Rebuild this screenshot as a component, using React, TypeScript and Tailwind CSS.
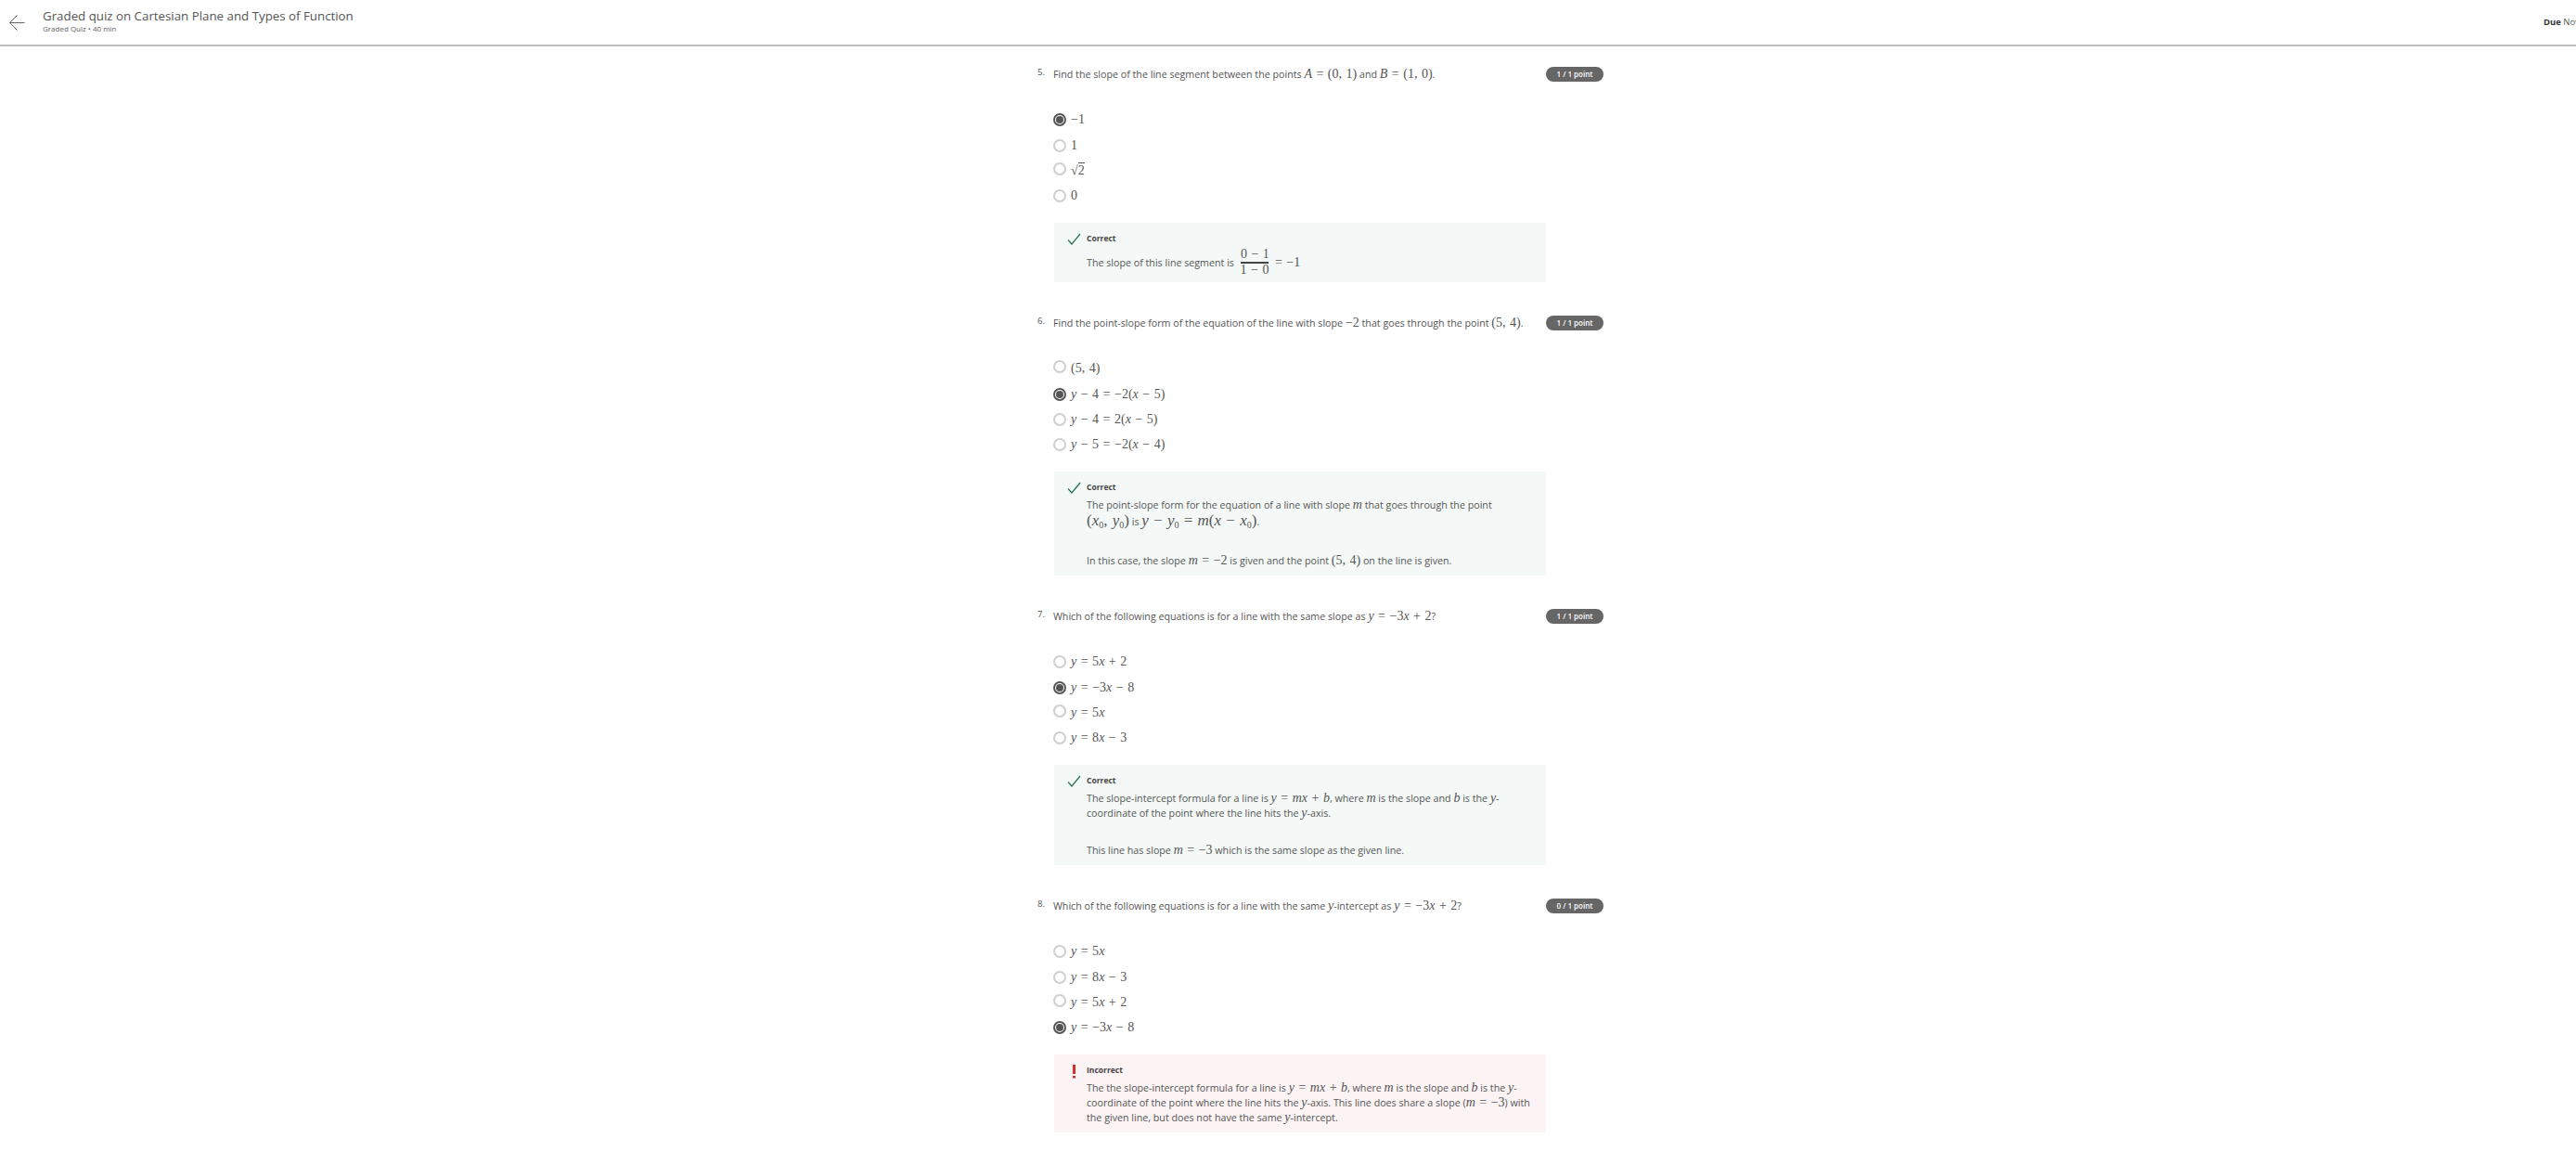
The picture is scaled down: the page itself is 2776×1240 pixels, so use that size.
import { ReactNode } from "react";

const M = ({ children }: { children: ReactNode }) => (
  <span className="font-['Liberation_Serif',serif] text-[14px] leading-none text-[#555] [word-spacing:1px]">{children}</span>
);
const V = ({ children }: { children: ReactNode }) => <i>{children}</i>;
const Sub0 = () => <sub className="text-[10px] leading-none not-italic">0</sub>;

const Radio = ({ checked, raised }: { checked?: boolean; raised?: boolean }) => (
  <span
    className={`-ml-[1px] flex h-[14px] w-[14px] shrink-0 items-center justify-center rounded-full border-2 bg-white ${
      checked ? "border-[#555]" : "border-[#cfcfcf]"
    } ${raised ? "-mt-[4px]" : ""}`}
  >
    {checked && <span className="h-[8px] w-[8px] rounded-full bg-[#555]" />}
  </span>
);

const Option = ({
  checked,
  raised,
  short,
  children,
}: {
  checked?: boolean;
  raised?: boolean;
  short?: boolean;
  children: ReactNode;
}) => (
  <div className={`flex items-center gap-[5px] ${short ? "h-[26px]" : "h-[28px]"}`}>
    <Radio checked={checked} raised={raised} />
    <M>{children}</M>
  </div>
);

const CheckIcon = () => (
  <svg width="15" height="14" viewBox="0 0 15 14" fill="none" className="shrink-0">
    <path d="M1 7.5l4 4.5L14 1" stroke="#2a7350" strokeWidth="1.3" />
  </svg>
);

const AlertIcon = () => (
  <svg width="15" height="16" viewBox="0 0 15 16" className="shrink-0">
    <rect x="6" y="0" width="3" height="10" fill="#d32f2f" />
    <rect x="6" y="12" width="3" height="2.5" fill="#d32f2f" />
  </svg>
);

const Feedback = ({ wrong, title, children }: { wrong?: boolean; title: string; children: ReactNode }) => (
  <div className={`mt-[15px] flex w-[530px] pb-[8px] pl-[14px] pr-[6px] pt-[9px] ${wrong ? "bg-[#fcf3f4]" : "bg-[#f4f9f7]"}`}>
    <div className="w-[21px] shrink-0 pt-[2px]">{wrong ? <AlertIcon /> : <CheckIcon />}</div>
    <div className="min-w-0 text-[10.7px] leading-[16px] text-[#555]">
      <div className="text-[8.5px] font-bold text-[#444]">{title}</div>
      <div className="mt-[3px]">{children}</div>
    </div>
  </div>
);

const Question = ({
  num,
  score,
  title,
  options,
  children,
}: {
  num: number;
  score: string;
  title: ReactNode;
  options: ReactNode;
  children: ReactNode;
}) => (
  <section className="mb-[36px]">
    <div className="flex h-[16px] items-center">
      <span className="w-[17px] shrink-0 self-start text-[9.5px] leading-[12px] text-[#555]">{num}.</span>
      <div className="w-[531px] shrink-0 whitespace-nowrap text-[10.7px] leading-[16px] text-[#555]">{title}</div>
      <span className="flex h-[16px] w-[62px] shrink-0 items-center justify-center rounded-full bg-[#666] text-[8px] font-semibold text-white">
        {score}
      </span>
    </div>
    <div className="ml-[18px]">
      <div className="mt-[27px]">{options}</div>
      {children}
    </div>
  </section>
);

export default function App() {
  return (
    <div className="h-[1240px] overflow-hidden bg-white font-['Open_Sans',sans-serif]">
      <header className="flex h-[50px] items-center justify-between border-b-2 border-[#bdbdbd]">
        <div className="flex items-center">
          <svg width="17" height="17" viewBox="0 0 17 17" fill="none" className="ml-[10px] mr-[19px]">
            <path d="M8.5 0.5l-8 8 8 8M0.5 8.5h16" stroke="#666" strokeWidth="1" />
          </svg>
          <div className="-mt-[5px]">
            <div className="text-[13.3px] leading-[18px] text-[#555]">Graded quiz on Cartesian Plane and Types of Function</div>
            <div className="text-[8px] leading-[10px] text-[#666]">Graded Quiz • 40 min</div>
          </div>
        </div>
        <div className="w-[35px] overflow-hidden whitespace-nowrap text-[9.5px] text-[#555]">
          <b className="text-[#333]">Due</b> Nov
        </div>
      </header>
      <main className="ml-[1118px] w-[610px] pt-[22px]">
        <Question
          num={5}
          score="1 / 1 point"
          title={
            <>
              Find the slope of the line segment between the points <M><V>A</V> = (0, 1)</M> and <M><V>B</V> = (1, 0)</M>.
            </>
          }
          options={
            <>
              <Option checked>−1</Option>
              <Option>1</Option>
              <Option short raised>√<span className="border-t border-[#555]">2</span></Option>
              <Option>0</Option>
            </>
          }
        >
          <Feedback title="Correct">
            <div className="-mb-[1px] flex h-[29px] items-center gap-[7px]">
              The slope of this line segment is
              <M>
                <span className="flex items-center">
                  <span className="flex w-[30px] flex-col items-center whitespace-nowrap leading-[14.5px]">
                    <span className="w-full border-b-2 border-[#444] text-center">0 − 1</span>
                    <span>1 − 0</span>
                  </span>
                  <span className="ml-[7px]">= −1</span>
                </span>
              </M>
            </div>
          </Feedback>
        </Question>
        <Question
          num={6}
          score="1 / 1 point"
          title={
            <>
              Find the point-slope form of the equation of the line with slope <M>−2</M> that goes through the point <M>(5, 4)</M>.
            </>
          }
          options={
            <>
              <Option raised>(5, 4)</Option>
              <Option checked><V>y</V> − 4 = −2(<V>x</V> − 5)</Option>
              <Option short><V>y</V> − 4 = 2(<V>x</V> − 5)</Option>
              <Option><V>y</V> − 5 = −2(<V>x</V> − 4)</Option>
            </>
          }
        >
          <Feedback title="Correct">
            <div>
              The point-slope form for the equation of a line with slope <M><V>m</V></M> that goes through the point
            </div>
            <div className="h-[20px] leading-[20px]">
              <M>
                <span className="text-[17px]">(<V>x</V><Sub0 />, <V>y</V><Sub0 />)</span>
              </M>{" "}
              is{" "}
              <M>
                <span className="text-[17px]"><V>y</V> − <V>y</V><Sub0 /> = <V>m</V>(<V>x</V> − <V>x</V><Sub0 />)</span>
              </M>
              .
            </div>
            <div className="mt-[24px]">
              In this case, the slope <M><V>m</V> = −2</M> is given and the point <M>(5, 4)</M> on the line is given.
            </div>
          </Feedback>
        </Question>
        <Question
          num={7}
          score="1 / 1 point"
          title={
            <>
              Which of the following equations is for a line with the same slope as <M><V>y</V> = −3<V>x</V> + 2</M>?
            </>
          }
          options={
            <>
              <Option><V>y</V> = 5<V>x</V> + 2</Option>
              <Option checked><V>y</V> = −3<V>x</V> − 8</Option>
              <Option short raised><V>y</V> = 5<V>x</V></Option>
              <Option><V>y</V> = 8<V>x</V> − 3</Option>
            </>
          }
        >
          <Feedback title="Correct">
            <div>
              The slope-intercept formula for a line is <M><V>y</V> = <V>mx</V> + <V>b</V></M>, where <M><V>m</V></M> is the slope and <M><V>b</V></M> is the <M><V>y</V></M>-coordinate of the point where the line hits the <M><V>y</V></M>-axis.
            </div>
            <div className="mt-[24px]">
              This line has slope <M><V>m</V> = −3</M> which is the same slope as the given line.
            </div>
          </Feedback>
        </Question>
        <Question
          num={8}
          score="0 / 1 point"
          title={
            <>
              Which of the following equations is for a line with the same <M><V>y</V></M>-intercept as <M><V>y</V> = −3<V>x</V> + 2</M>?
            </>
          }
          options={
            <>
              <Option><V>y</V> = 5<V>x</V></Option>
              <Option><V>y</V> = 8<V>x</V> − 3</Option>
              <Option short raised><V>y</V> = 5<V>x</V> + 2</Option>
              <Option checked><V>y</V> = −3<V>x</V> − 8</Option>
            </>
          }
        >
          <Feedback wrong title="Incorrect">
            The the slope-intercept formula for a line is <M><V>y</V> = <V>mx</V> + <V>b</V></M>, where <M><V>m</V></M> is the slope and <M><V>b</V></M> is the <M><V>y</V></M>-coordinate of the point where the line hits the <M><V>y</V></M>-axis. This line does share a slope (<M><V>m</V> = −3</M>) with the given line, but does not have the same <M><V>y</V></M>-intercept.
          </Feedback>
        </Question>
      </main>
    </div>
  );
}
